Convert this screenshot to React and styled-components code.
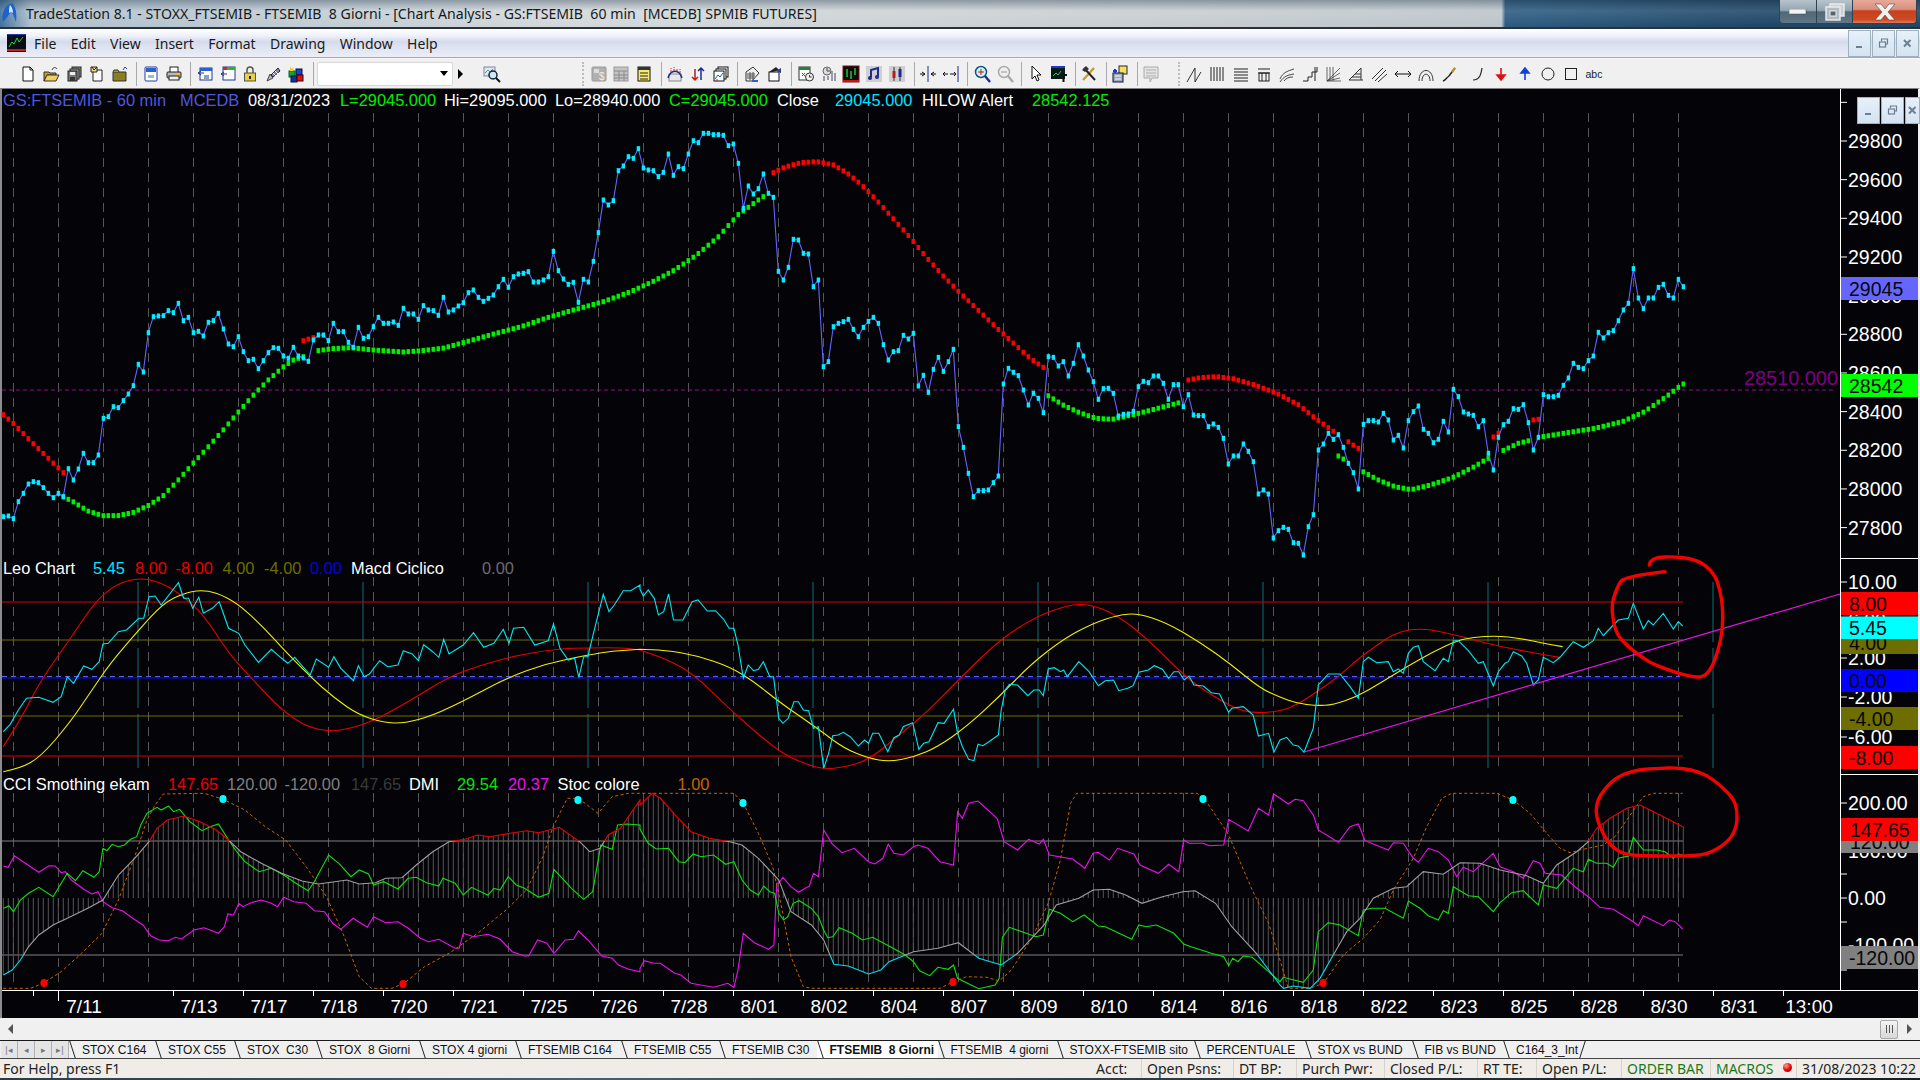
import styled, { createGlobalStyle } from 'styled-components';

const GlobalStyle = createGlobalStyle`
  html, body {
    margin: 0;
    padding: 0;
    width: 1920px;
    height: 1080px;
    overflow: hidden;
    background: #f0f0f0;
  }
  * {
    box-sizing: border-box;
  }
`;

const CHART_BG = '#040308';
const ARIAL = '"Liberation Sans", Arial, sans-serif';
const UI_FONT = '"Noto Sans", "Open Sans", sans-serif';

/* ---------- layout ---------- */

const Window = styled.div`
  width: 1920px;
  height: 1080px;
  display: flex;
  flex-direction: column;
  overflow: hidden;
`;

const TitleBar = styled.div`
  height: 29px;
  display: flex;
  align-items: flex-start;
  border-bottom: 2px solid #2a3138;
  background:
    linear-gradient(180deg, rgba(40, 60, 80, 0.38) 0, rgba(255, 255, 255, 0.12) 40%, rgba(255, 255, 255, 0) 100%),
    linear-gradient(90deg, #3e6f9c 0, #aebfcc 1.6%, #d3d8db 30%, #c7cdd1 60%, #bcc5cb 78.2%, #2b5a7f 78.4%, #1d4566 92%);
`;

const AppIcon = styled.svg`
  width: 18px;
  height: 24px;
  margin: 2px 7px 0 1px;
  flex: none;
`;

const TitleText = styled.div`
  font: 14.13px ${UI_FONT};
  line-height: 28px;
  color: #15191c;
  white-space: pre;
  flex: 1;
`;

const WinButton = styled.div`
  width: ${(props) => props.$w}px;
  height: 24px;
  display: flex;
  align-items: center;
  justify-content: center;
  border: 1px solid #33414d;
  border-top: none;
  border-left-width: ${(props) => (props.$first ? 1 : 0)}px;
  border-radius: ${(props) => (props.$first ? '0 0 0 4px' : props.$close ? '0 0 4px 0' : '0')};
  background: ${(props) =>
    props.$close
      ? 'linear-gradient(180deg, #e8a898 0, #d99080 40%, #c8401c 48%, #cc4a24 85%, #e07858 100%)'
      : 'linear-gradient(180deg, #b7c4cd 0, #93a5b1 45%, #51687a 52%, #5f7686 100%)'};
`;

const WinControls = styled.div`
  display: flex;
  margin-right: 3px;
`;

const MenuBar = styled.div`
  height: 29px;
  display: flex;
  align-items: center;
  padding: 0 1px 0 7px;
  border-bottom: 1px solid #a8a8b0;
  background: linear-gradient(180deg, #ffffff 0, #f1f3fa 22%, #d6dbed 45%, #dfe3f2 65%, #ebeef7 100%);
`;

const MenuLogo = styled.svg`
  width: 19px;
  height: 18px;
  flex: none;
  margin-right: 8px;
`;

const MenuList = styled.div`
  display: flex;
  gap: 14.3px;
  flex: 1;
`;

const MenuItem = styled.span`
  font: 14px ${UI_FONT};
  color: #1a1a1a;
`;

const MdiButtons = styled.div`
  display: flex;
  gap: 1px;
  ${(props) => (props.$floating ? 'position: absolute; top: 8px; right: -2px;' : '')}
`;

const MdiButton = styled.div`
  width: ${(props) => props.$w || 23}px;
  height: 27px;
  display: flex;
  align-items: center;
  justify-content: center;
  background: linear-gradient(180deg, #e6f0f9, #d4e3f3);
  border: 1px solid #9fb0be;
`;

const Toolbar = styled.div`
  height: 30px;
  display: flex;
  align-items: center;
  padding-left: 17px;
  background: #f0f0f0;
  border-top: 1px solid #f8f8f8;
`;

const ToolSlot = styled.div`
  width: ${(props) => props.$w || 22.9}px;
  height: 20px;
  flex: none;
  display: flex;
  align-items: center;
  justify-content: center;
`;

const ToolSep = styled.div`
  width: 1px;
  height: 24px;
  flex: none;
  margin: 0 2px 0 5px;
  background: #a9a9a9;
`;

const ToolGap = styled.div`
  width: ${(props) => props.$w}px;
  flex: none;
`;

const ToolGrip = styled.div`
  width: 2px;
  height: 24px;
  flex: none;
  border-left: 2px dotted #bdbdbd;
  margin-right: 3px;
`;

const ComboBox = styled.div`
  width: 136px;
  height: 24px;
  flex: none;
  margin-left: 1.5px;
  display: flex;
  align-items: center;
  justify-content: flex-end;
  padding-right: 4px;
  background: #fff;
  border: 1px solid #d8d8d8;
  border-radius: 2px;
`;

const ComboArrow = styled.span`
  width: 0;
  height: 0;
  border-left: 4.5px solid transparent;
  border-right: 4.5px solid transparent;
  border-top: 5px solid #000;
`;

const PlayArrow = styled.span`
  width: 0;
  height: 0;
  flex: none;
  margin-left: 5px;
  border-top: 5px solid transparent;
  border-bottom: 5px solid transparent;
  border-left: 5px solid #000;
`;

const ChartFrame = styled.div`
  height: 930px;
  display: flex;
  flex-direction: column;
  background: ${CHART_BG};
  border-top: 1px solid #808080;
  border-left: 2px solid #8c8c8c;
  border-right: 2px solid #f0f0f0;
`;

const Pane = styled.div`
  height: ${(props) => props.$h}px;
  flex: none;
  display: flex;
  position: relative;
`;

const Plot = styled.svg`
  width: 1838px;
  height: 100%;
  flex: none;
  overflow: visible;
  display: block;
`;

const Axis = styled.svg`
  width: 78px;
  height: 100%;
  flex: none;
  display: block;
  background: linear-gradient(#fff, #fff) left top / 1px 100% no-repeat;
`;

const AxisText = styled.text`
  font: 19.5px ${ARIAL};
  dominant-baseline: central;
  fill: ${(props) => props.$fill || '#fff'};
`;

const Legend = styled.div`
  position: absolute;
  top: ${(props) => props.$top}px;
  left: 1px;
  display: flex;
  height: 20px;
  align-items: center;
`;

const LegendItem = styled.span`
  width: ${(props) => (props.$w ? `${props.$w}px` : 'auto')};
  flex: none;
  white-space: pre;
  font: 16.4px ${ARIAL};
  color: ${(props) => props.$c};
`;

const TimeAxis = styled.div`
  height: 28px;
  flex: none;
  display: flex;
  position: relative;
  padding-left: 47px;
  border-top: 1px solid #fff;
`;

const TimeLabel = styled.div`
  width: 70px;
  flex: none;
  position: relative;
  margin-left: ${(props) => props.$ml || 0}px;
  padding-top: 5px;
  text-align: center;
  font: 19px ${ARIAL};
  color: #fff;

  &::before {
    content: '';
    position: absolute;
    left: 9px;
    top: 0;
    width: 1px;
    height: ${(props) => (props.$long ? 10 : 5)}px;
    background: #fff;
  }
`;

const SmallTick = styled.span`
  position: absolute;
  left: 31px;
  top: 0;
  width: 1px;
  height: 5px;
  background: #fff;
`;

const ScrollRow = styled.div`
  height: 22px;
  flex: none;
  display: flex;
  align-items: center;
  padding: 0 8px 0 8px;
  background: #f0f0f0;
`;

const ScrollArrow = styled.span`
  width: 0;
  height: 0;
  flex: none;
  border-top: 5px solid transparent;
  border-bottom: 5px solid transparent;
  ${(props) => (props.$right ? 'border-left: 5px solid #555;' : 'border-right: 5px solid #555;')}
`;

const ScrollTrack = styled.div`
  flex: 1;
`;

const ScrollThumb = styled.div`
  width: 18px;
  height: 19px;
  flex: none;
  margin-right: 9px;
  display: flex;
  gap: 2px;
  align-items: center;
  justify-content: center;
  border: 1px solid #a8a8a8;
  border-radius: 2px;
  background: linear-gradient(180deg, #f4f4f4, #d8d8d8);

  & > i {
    width: 1px;
    height: 8px;
    background: #555;
  }
`;

const TabRow = styled.div`
  height: 19px;
  flex: none;
  display: flex;
  align-items: stretch;
  background: #f0f0f0;
  border-top: 1px solid #1a1a1a;
  border-bottom: 1px solid #444;
`;

const TabNav = styled.div`
  width: 69px;
  flex: none;
  display: flex;
  padding-left: 1px;
`;

const TabNavButton = styled.div`
  width: 17px;
  display: flex;
  align-items: center;
  justify-content: center;
  color: #777;
  font: 9px ${ARIAL};
  border-right: 1px solid #b0b0b0;
  background: #e4e4e4;
`;

const Tab = styled.div`
  position: relative;
  flex: none;
  width: ${(props) => props.$w}px;
  padding: 1px 0 0 13px;
  font: ${(props) => (props.$active ? 'bold ' : '')}12px ${ARIAL};
  line-height: 17px;
  white-space: pre;
  color: #111;
  background: ${(props) => (props.$active ? '#fff' : 'transparent')};

  &::before {
    content: '';
    position: absolute;
    left: 3px;
    top: 0;
    bottom: 0;
    border-left: 1px solid #222;
    transform: skewX(18deg);
  }

  &:last-child::after {
    content: '';
    position: absolute;
    right: 2px;
    top: 0;
    bottom: 0;
    border-left: 1px solid #222;
    transform: skewX(-18deg);
  }
`;

const StatusBar = styled.div`
  height: 19px;
  flex: none;
  display: flex;
  align-items: center;
  background: #f0ede9;
  font: 14px ${UI_FONT};
  color: #222;
`;

const StatusHelp = styled.div`
  flex: 1;
  padding-left: 3px;
`;

const StatusCell = styled.div`
  width: ${(props) => props.$w}px;
  flex: none;
  padding-left: 5px;
  white-space: nowrap;
  overflow: hidden;
  color: ${(props) => props.$c || '#222'};
  border-left: ${(props) => (props.$plain ? 'none' : '1px solid #d6d2ce')};
  display: flex;
  align-items: center;
  height: 100%;
`;

const StatusDot = styled.span`
  width: 9px;
  height: 9px;
  border-radius: 50%;
  margin-bottom: 3px;
  background: radial-gradient(circle at 35% 30%, #ff9a9a, #e00000 55%, #800000);
`;

const BottomEdge = styled.div`
  height: 2px;
  flex: none;
  background: linear-gradient(90deg, #2a3a48, #48606e 30%, #22303a 70%, #12202c);
`;

/* ---------- toolbar icons ---------- */

const ToolSvg = styled.svg`
  width: 18px;
  height: 18px;
  display: block;
`;

const ICONS = {
  newDoc: <><path d="M4 2h7l3 3v11H4z" fill="#fff" stroke="#111" /><path d="M11 2v3h3" fill="none" stroke="#111" /></>,
  openFolder: <><path d="M2 7h5l1 1h6v2H5l-3 6z" fill="#c89a2a" stroke="#333" /><path d="M2 16l3-6h12l-3 6z" fill="#f0cf60" stroke="#333" /><path d="M10 5c1-3 4-3 5-1" fill="none" stroke="#333" /></>,
  saveAll: <><rect x="7" y="2" width="9" height="10" fill="#888" stroke="#222" /><rect x="5" y="4" width="9" height="10" fill="#aaa" stroke="#222" /><rect x="3" y="6" width="9" height="10" fill="#777" stroke="#222" /><rect x="5" y="7" width="5" height="3" fill="#eee" /><rect x="5" y="12" width="5" height="4" fill="#333" /></>,
  docTag: <><path d="M5 5h9v11H5z" fill="#fff" stroke="#222" /><path d="M3 2h6v5H3z" fill="#f4e27a" stroke="#222" /><path d="M4 2l2 3 3-3" fill="none" stroke="#222" /></>,
  folderUp: <><path d="M2 7h13v9H2z" fill="#8a7f20" stroke="#333" /><path d="M2 7l1-2h4l1 2" fill="#a89a30" stroke="#333" /><path d="M12 5l2-3 2 2" fill="none" stroke="#2244aa" /></>,
  preview: <><rect x="3" y="2" width="12" height="14" rx="1" fill="#fff" stroke="#1f3fa8" /><rect x="4" y="3" width="10" height="4" fill="#2d5fd0" /><rect x="6" y="10" width="6" height="3" fill="#9bc" /></>,
  printer: <><rect x="5" y="2" width="8" height="6" fill="#fff" stroke="#222" /><rect x="2" y="7" width="14" height="6" rx="1" fill="#b8b8b8" stroke="#222" /><rect x="4" y="11" width="10" height="4" fill="#eee" stroke="#222" /><path d="M11 9h3" stroke="#f0c030" strokeWidth="2" /></>,
  winBack: <><rect x="4" y="3" width="12" height="12" fill="#fff" stroke="#1b3a8f" /><rect x="4" y="3" width="12" height="3" fill="#2d5fd0" /><path d="M8 8H2l3-2M2 8l3 2" fill="none" stroke="#1b3a8f" /><path d="M8 11h5M8 13h5" stroke="#1b3a8f" /></>,
  winBars: <><rect x="4" y="2" width="12" height="13" fill="#fff" stroke="#1b3a8f" /><rect x="4" y="2" width="4" height="3" fill="#d22" /><rect x="8" y="2" width="4" height="3" fill="#2b2" /><rect x="12" y="2" width="4" height="3" fill="#2b2" /><path d="M8 9H2l3-2M2 9l3 2" fill="none" stroke="#1b3a8f" /></>,
  lock: <><path d="M6 8V5a3 3 0 0 1 6 0v3" fill="none" stroke="#555" strokeWidth="1.5" /><rect x="3.5" y="8" width="11" height="8" fill="#e8d040" stroke="#554" /><rect x="8" y="11" width="2" height="3" fill="#222" /></>,
  wand: <><path d="M3 16l3-7 3 4z" fill="#bbb" stroke="#444" /><path d="M7 10l7-7 2 3-7 6z" fill="#88a" stroke="#224" /><path d="M9 8l3 3M11 6l3 3" stroke="#fff" /></>,
  cubes: <><rect x="2" y="6" width="6" height="6" fill="#19a030" stroke="#063" /><rect x="9" y="4" width="6" height="6" fill="#2040d0" stroke="#013" /><rect x="4" y="11" width="6" height="6" fill="#1a30a0" stroke="#013" /><rect x="10" y="10" width="6" height="6" fill="#d01818" stroke="#400" /><path d="M3 1l2 3 2-2-1 4-3 0z" fill="#f0d020" /></>,
  search: <><rect x="1" y="2" width="11" height="9" fill="#dfe6ef" stroke="#7a8aa0" /><path d="M2 8l3-3 2 2 3-3" fill="none" stroke="#4a7" /><circle cx="10" cy="10" r="4" fill="#cfe8f4" stroke="#123" strokeWidth="1.5" /><path d="M13 13l4 4" stroke="#111" strokeWidth="2" /></>,
  greyCalc: <><rect x="2" y="2" width="14" height="14" rx="1" fill="#b0b0b0" stroke="#9a9a9a" /><rect x="4" y="4" width="5" height="4" fill="#dcdcdc" /><text x="9" y="15" fontSize="10" fill="#eee" fontFamily={ARIAL}>$</text></>,
  greyTable: <><rect x="2" y="2" width="14" height="14" fill="#c4c4c4" stroke="#9a9a9a" /><path d="M2 6h14M2 10h14M2 13h14M7 6v10M12 6v10" stroke="#8a8a8a" /></>,
  yellowTable: <><rect x="3" y="2" width="12" height="14" fill="#f7ea70" stroke="#111" /><rect x="3" y="2" width="12" height="3" fill="#333" /><path d="M5 8h8M5 11h8M5 14h8" stroke="#222" /></>,
  chartHat: <><rect x="3" y="9" width="12" height="7" fill="#e8e8e8" stroke="#888" /><path d="M2 13c3-9 11-9 14 0" fill="none" stroke="#1e2a90" strokeWidth="1.4" /><path d="M5 7V3M8 6V2M11 6V3M14 8V4" stroke="#d02020" strokeDasharray="2 1" /></>,
  sortArrows: <><path d="M6 4v11M3 12l3 3 3-3" fill="none" stroke="#c01818" strokeWidth="1.5" /><path d="M12 15V3M9 6l3-3 3 3" fill="none" stroke="#1a2a90" strokeWidth="1.5" /></>,
  chartStack: <><rect x="6" y="2" width="10" height="10" fill="#fff" stroke="#111" /><rect x="4" y="4" width="10" height="10" fill="#fff" stroke="#111" /><rect x="2" y="6" width="10" height="10" fill="#fff" stroke="#111" /><path d="M3 14l3-4 2 2 3-4" fill="none" stroke="#1a50d0" /><path d="M4 15h2" stroke="#c22" /></>,
  sheetLines: <><path d="M3 7l7-5 6 6-7 8H3z" fill="#eee" stroke="#333" /><path d="M4 9h8M4 11h8M4 13h7M7 7v8M10 7v8" stroke="#555" /><path d="M9 16h6" stroke="#2d5fd0" strokeWidth="2" /></>,
  capBox: <><rect x="3" y="7" width="10" height="9" fill="#fff" stroke="#111" /><path d="M3 7l7-5 3 3-6 2z" fill="#222" /><path d="M10 6l5-3v5z" fill="#2d3f90" /></>,
  calendar: <><rect x="2" y="2" width="11" height="13" fill="#fff" stroke="#333" /><rect x="2" y="2" width="11" height="3" fill="#1a8a30" /><path d="M5 8l3 3M8 8l-3 3" stroke="#c01818" /><circle cx="12.5" cy="12" r="4" fill="#eee" stroke="#333" /><path d="M12.5 10v2h2" fill="none" stroke="#333" /></>,
  dialBars: <><circle cx="7" cy="6" r="4" fill="#ddd" stroke="#666" /><path d="M7 3v3h3" fill="none" stroke="#444" /><path d="M4 11v5M8 11v4M12 6v10M15 8v8" stroke="#778" strokeWidth="1.4" /></>,
  blackChart: <><rect x="1" y="1" width="16" height="16" fill="#0a0a0a" stroke="#7a1010" /><rect x="1" y="15" width="16" height="2" fill="#d01010" /><path d="M5 4v8M9 6v8M13 3v7" stroke="#20d040" strokeWidth="1.4" /></>,
  blueNote: <><rect x="1" y="1" width="16" height="16" fill="#cfcfcf" /><path d="M6 12V5l7-2v8" fill="none" stroke="#1a2a90" strokeWidth="2" /><circle cx="5" cy="13" r="2" fill="#1a2a90" /><circle cx="12" cy="12" r="2" fill="#1a2a90" /></>,
  candles: <><rect x="1" y="1" width="16" height="16" fill="#cfcfcf" /><path d="M6 2v14M12 2v14" stroke="#333" /><rect x="4.5" y="6" width="3" height="7" fill="#c01818" /><rect x="10.5" y="4" width="3" height="8" fill="#1a2a90" /></>,
  arrowsIn: <><path d="M9 1v16" stroke="#1a2a90" /><path d="M1 9h5M3 7l3 2-3 2M17 9h-5M15 7l-3 2 3 2" fill="none" stroke="#111" /></>,
  arrowsOut: <><path d="M16 1v16" stroke="#1a2a90" /><path d="M1 9h5M3 7L1 9l2 2M8 9h6M12 7l2 2-2 2" fill="none" stroke="#111" /></>,
  zoomIn: <><circle cx="8" cy="7" r="5.5" fill="#d8f0f4" stroke="#0a5a80" strokeWidth="1.5" /><path d="M5 7h6M8 4v6" stroke="#c01818" /><path d="M12 11l5 6" stroke="#1a2a90" strokeWidth="2.4" /></>,
  zoomOut: <><circle cx="8" cy="7" r="5.5" fill="#eee" stroke="#aaa" strokeWidth="1.5" /><path d="M5 7h6" stroke="#999" /><path d="M12 11l5 6" stroke="#aaa" strokeWidth="2.4" /></>,
  cursor: <path d="M5 1v13l3-3 2 5 2-1-2-5h4z" fill="#fff" stroke="#111" />,
  chartT: <><rect x="1" y="3" width="14" height="11" fill="#0a1a14" /><rect x="1" y="1" width="14" height="2" fill="#1a3ad0" /><path d="M3 11l3-3 2 2 3-4" fill="none" stroke="#30d060" /><path d="M10 10h7M13.5 10v7" stroke="#111" strokeWidth="2" /></>,
  tools: <><path d="M3 15L14 3" stroke="#c0a030" strokeWidth="2.4" /><path d="M4 3l11 12" stroke="#222" strokeWidth="2" /><path d="M2 5l4-4 3 3-4 3z" fill="#333" /></>,
  boxes: <><rect x="8" y="1" width="8" height="8" fill="#f4e060" stroke="#223" /><rect x="2" y="8" width="10" height="9" fill="#9ab" stroke="#113" /><path d="M2 6h4M4 4v4" stroke="#1a3ad0" strokeWidth="2" /><path d="M4 11h6M4 14h6" stroke="#fff" /></>,
  greySheet: <><path d="M2 2h14v11H10l-2 4v-4H2z" fill="#e4e4e4" stroke="#aaa" /><path d="M4 5h10M4 8h10M4 11h10" stroke="#b0b0b0" /></>,
  lineTwin: <path d="M2 17L10 3l0 14 6-10" fill="none" stroke="#333" />,
  vLines: <path d="M3 2v14M6 2v14M9 2v14M12 2v14M15 2v14" stroke="#222" />,
  hLines: <path d="M2 4h14M2 7h14M2 10h14M2 13h14M2 16h14" stroke="#222" />,
  tile: <><path d="M3 4h12M3 8h12" stroke="#222" /><rect x="4" y="8" width="10" height="8" fill="none" stroke="#222" /><path d="M7 8v8M11 8v8" stroke="#222" /></>,
  arcs: <path d="M2 14c3-7 8-8 14-10M2 17c4-6 8-7 14-8M6 16c2-3 5-4 9-4" fill="none" stroke="#444" />,
  stairs: <path d="M2 16h5v-4h4V7h5V2M14 2v14" fill="none" stroke="#222" />,
  fan: <path d="M3 2v14h14M3 16L16 3M3 16L16 8M3 16l13-3M6 2v14M9 2v14" fill="none" stroke="#444" strokeWidth="0.8" />,
  triLine: <path d="M2 15h14M2 15L14 3v12M5 12h9M8 9h6" fill="none" stroke="#333" />,
  doubleSlash: <path d="M2 14L13 3M5 16L16 5M8 17L17 9" fill="none" stroke="#333" />,
  hArrow: <path d="M1 9h16M4 6L1 9l3 3M14 6l3 3-3 3" fill="none" stroke="#111" />,
  hoops: <path d="M2 16c0-14 14-14 14 0M5 16c0-9 8-9 8 0" fill="none" stroke="#333" />,
  pencil: <><path d="M3 16c3-1 3-3 6-5l6-8" fill="none" stroke="#222" strokeWidth="1.5" /><path d="M12 7l3-4" stroke="#c09020" strokeWidth="2.2" /></>,
  curve: <path d="M4 15c7 0 8-6 9-12" fill="none" stroke="#222" strokeWidth="1.2" />,
  redDown: <path d="M9 3v8M5 10l4 5 4-5z" fill="#e01010" stroke="#e01010" strokeWidth="1.6" />,
  blueUp: <path d="M9 15V7M5 8l4-5 4 5z" fill="#1040e0" stroke="#1040e0" strokeWidth="1.6" />,
  circle: <circle cx="9" cy="9" r="6" fill="none" stroke="#222" />,
  square: <rect x="3.5" y="3.5" width="11" height="11" fill="none" stroke="#222" />,
  abc: <text x="9" y="13" fontSize="10.5" textAnchor="middle" fill="#222" fontFamily={ARIAL}>abc</text>,
};

const TOOLS_LEFT = ['newDoc', 'openFolder', 'saveAll', 'docTag', 'folderUp', '|', 'preview', 'printer', '|', 'winBack', 'winBars', 'lock', 'wand', 'cubes', '|'];
const TOOLS_MID = ['greyCalc', 'greyTable', 'yellowTable', '|', 'chartHat', 'sortArrows', 'chartStack', '|', 'sheetLines', 'capBox', '|', 'calendar', 'dialBars', 'blackChart', 'blueNote', 'candles', '|', 'arrowsIn', 'arrowsOut', '|', 'zoomIn', 'zoomOut', '|', 'cursor', 'chartT', '|', 'tools', '|', 'boxes', '|', 'greySheet'];
const TOOLS_RIGHT = ['lineTwin', 'vLines', 'hLines', 'tile', 'arcs', 'stairs', 'fan', 'triLine', 'doubleSlash', 'hArrow', 'hoops', 'pencil'];
const TOOLS_END = ['curve', 'redDown', 'blueUp', 'circle', 'square', 'abc'];

function ToolGroup({ items, slot }) {
  return items.map((name, i) =>
    name === '|' ? (
      <ToolSep key={i} />
    ) : (
      <ToolSlot key={i} $w={slot}>
        <ToolSvg viewBox="0 0 18 18">{ICONS[name]}</ToolSvg>
      </ToolSlot>
    )
  );
}

/* ---------- chart data, read off the picture as zoomed crops ---------- */

const Z6 = [1600, 3, 540];
const Z8 = [0, 2.45, 550];
const Z9 = [640, 2.45, 550];
const Z10 = [1260, 3, 550];
const Z11 = [0, 1.8233, 110];
const Z12 = [860, 1.8233, 110];

const pairs = (flat, [x0, sx, y0]) => {
  const out = [];
  for (let i = 0; i < flat.length; i += 2) out.push([x0 + flat[i] / sx, y0 + flat[i + 1] / 3]);
  return out;
};

const stitch = (a, b, c) => [...pairs(a, Z8), ...pairs(b, Z9), ...pairs(c, Z10).filter((p) => p[0] > 1280)];

const interp = (pts, x) => {
  if (x <= pts[0][0]) return pts[0][1];
  for (let i = 1; i < pts.length; i++) {
    if (x <= pts[i][0]) {
      const t = (x - pts[i - 1][0]) / (pts[i][0] - pts[i - 1][0] || 1);
      return pts[i - 1][1] + t * (pts[i][1] - pts[i - 1][1]);
    }
  }
  return pts[pts.length - 1][1];
};

const polyline = (pts) => pts.map((p) => `${p[0].toFixed(1)},${p[1].toFixed(1)}`).join(' ');

const smoothPath = (pts) => {
  let d = `M${pts[0][0]} ${pts[0][1]}`;
  for (let i = 1; i < pts.length - 1; i++) {
    const mx = (pts[i][0] + pts[i + 1][0]) / 2;
    const my = (pts[i][1] + pts[i + 1][1]) / 2;
    d += `Q${pts[i][0].toFixed(1)} ${pts[i][1].toFixed(1)} ${mx.toFixed(1)} ${my.toFixed(1)}`;
  }
  const last = pts[pts.length - 1];
  return `${d}L${last[0]} ${last[1]}`;
};

const PRICE_A = [1220,1218,1226,1175,1150,1122,1115,1118,1133,1150,1163,1150,1160,1076,1110,1077,1030,1058,1058,1035,925,920,890,893,872,852,827,763,786,668,620,618,617,602,608,580,632,622,668,664,678,637,632,610,657,702,710,680,725,752,748,776,752,728,713,715,738,745,712,738,744,754,690,675,675,692,640,665,665,697,712,652,685,680,650,622,640,640,636,646,595,612,612,628,587,600,602,616,562,606,600,588,578,548,540,562,574,565,555,530,508,532,500,492,490,485,516,516,510,500,424,482,507,523,517,577,508,516,454,368,270,285,272,182,168,140,145,116,174,180,182,200,187,132,196,170,176,132,92,98,70,70,74,74,76,107,102,160,295,228,252,236,192,250,262,484,510,472,388,390,430,432,530,510,770,755,650,640,635,628,658,680];
const PRICE_B = [652,634,622,640,704,750,725,722,676,687,670,828,796,847,778,742,784,755,718,950,1012,1090,1160,1142,1142,1140,1118,1098,822,775,787,797,840,885,850,865,908,740,742,768,755,798,760,704,738,780,815,868,836,835,850,918,913,912,904,830,814,818,798,798,820,868,824,824,890,854,915,917,917,950,942,952,985,1062,1038,1038,1002,1024,1055,1152,1140,1152,1284,1262,1252,1258,1298,1300,1335,1250,1214,1020,1002,970,988,974,1012,1060,1088,1137,943,932,932,936,910,930,990,976,1014,932,905,888,958,970,998,988,934,966,838,860,906,912,916,950,932,1030,1080,982,944,934,896,898,884,938,1020,982,854,860,860,856,826,804,760,772,776,752,738,667,684,668,662,632,600,580,476,564,596,564,564,532,523,556,564,508,530];

const PRICE = [
  ...PRICE_A.map((z, i) => [3.3 + 5 * i, 110 + z / 3]),
  ...PRICE_B.map((z, i) => [863.3 + 5 * i, 110 + z / 3]),
];

const HILOW_GREEN = [
  pairs([115,1160,133,1175,160,1203,187,1217,215,1217,242,1208,270,1187,297,1158,325,1110,352,1060,380,1010,407,960,434,907,462,855,489,810,517,770,535,750,553,740], Z11),
  pairs([580,722,607,716,640,713,680,720,735,726,770,722,810,714,840,700,900,672,950,650,1000,622,1050,598,1100,575,1150,545,1190,515,1230,480,1270,435,1310,380,1345,315,1391,260], Z11),
  pairs([343,857,370,885,400,908,430,925,460,928,490,917,520,905,550,892,582,878], Z12),
  pairs([872,1038,882,1048], Z12),
  pairs([917,1085,945,1110,975,1130,1005,1139,1040,1125,1080,1103,1120,1070,1145,1045], Z12),
  pairs([1172,1022,1200,1000,1220,992], Z12),
  pairs([1245,980,1290,968,1340,955,1390,935,1430,905,1470,860,1500,822], Z12),
];

const HILOW_RED = [
  pairs([6,914,24,940,60,1000,115,1088], Z11),
  pairs([553,692,571,683], Z11),
  [...pairs([1410,188,1430,172,1460,158,1490,155,1520,165,1545,190,1564,215], Z11), ...pairs([6,230,30,270,60,325,90,380,120,440,150,495,180,545,215,600,250,655,280,700,310,745,334,772], Z12)],
  pairs([590,813,620,803,650,800,680,806,720,825,760,850,800,885,830,925,864,965], Z12),
  pairs([890,995,908,1015], Z12),
  pairs([1154,982,1163,970], Z12),
  pairs([1227,930,1236,928], Z12),
];

const sampleDots = (pts) => {
  const out = [];
  const first = Math.ceil((pts[0][0] - 3.3) / 5 - 0.01);
  for (let i = first; 3.3 + 5 * i <= pts[pts.length - 1][0] + 1; i++) {
    const x = 3.3 + 5 * i;
    out.push([x, interp(pts, x)]);
  }
  return out;
};

const LEO = stitch(
  [8,545,25,523,45,480,65,445,95,442,130,457,150,440,165,380,180,400,205,348,225,358,243,335,252,282,265,280,290,245,310,240,340,205,352,205,365,140,380,138,395,165,437,98,450,145,462,145,472,175,487,142,498,190,520,175,537,155,560,235,585,250,600,285,633,337,665,298,690,325,705,340,722,322,760,375,775,327,805,352,818,320,835,355,866,392,878,347,892,380,905,372,930,332,950,350,975,345,988,302,1010,312,1025,332,1038,284,1060,305,1075,322,1087,268,1100,312,1135,285,1160,248,1185,292,1210,280,1233,238,1247,280,1258,235,1283,232,1310,285,1343,272,1356,222,1372,295,1392,330,1408,325,1418,382,1430,320,1440,320,1455,245,1478,133,1492,185,1505,165,1527,122,1545,122,1568,105],
  [0,118,8,138,20,120,35,145,45,195,58,185,70,132,82,210,105,210,128,155,142,150,165,183,185,182,205,208,218,235,230,235,240,285,253,385,265,345,278,362,290,358,302,335,318,380,327,380,340,505,350,520,363,505,377,455,388,455,400,480,413,482,425,535,437,530,450,655,462,610,472,557,485,555,498,547,515,560,535,588,550,570,560,580,570,550,585,550,607,605,622,563,635,555,645,530,668,518,683,598,695,580,708,575,730,518,745,520,768,478,778,550,790,590,805,628,818,632,828,583,840,587,855,575,878,555,885,480,895,420,905,403,925,405,950,437,965,420,978,420,988,437,1000,357,1015,353,1030,365,1038,360,1047,380,1075,335,1100,365,1123,407,1140,392,1160,390,1173,422,1195,415,1208,407,1222,367,1245,360,1260,347,1280,358,1295,385,1308,365,1320,365,1333,390,1345,378,1357,405,1380,408,1400,428,1420,432,1442,487,1450,475,1478,470,1502,495,1515,558,1540,550,1553,607,1568,570],
  [0,553,22,550,40,605,60,570,80,562,100,585,115,588,132,607,160,535,175,405,205,372,240,372,270,410,295,445,310,335,325,322,350,338,385,335,400,365,415,357,430,370,445,310,460,292,475,287,490,335,525,362,550,325,565,335,580,272,595,272,625,302,655,340,670,335,700,408,715,365,735,340,745,335,760,305,785,318,800,340,820,405,835,390,850,322,880,338,900,322,940,275,970,292,1000,272,1015,235,1030,257,1060,225,1075,210,1105,205,1120,160,1150,237,1165,212,1180,225,1210,190,1240,237,1255,215,1268,228]
);

const MACD_RED = stitch(
  [8,590,50,510,100,390,170,270,230,160,280,105,340,83,390,95,440,130,500,195,560,310,620,390,690,480,750,530,810,545,860,535,920,510,1000,455,1100,380,1180,345,1260,318,1360,297,1450,293,1520,293,1568,300],
  [0,300,60,325,130,370,230,490,340,605,400,640,450,658,500,652,560,630,640,550,700,490,780,390,880,270,970,200,1050,165,1100,162,1170,195,1250,275,1340,385,1400,435,1480,490,1568,485],
  [10,490,60,485,120,460,170,425,230,385,290,330,345,290,400,252,450,238,510,238,600,258,680,280,760,297,840,312,900,322]
);

const MACD_YELLOW = stitch(
  [8,665,50,655,100,620,170,520,220,430,270,340,340,240,400,160,450,130,490,120,530,128,580,158,640,225,700,305,760,380,820,445,880,495,940,518,990,520,1060,497,1140,450,1240,385,1340,340,1440,315,1500,303,1568,298],
  [0,298,60,300,140,317,220,350,280,395,340,455,440,540,500,595,560,625,610,635,670,622,730,590,800,530,880,440,960,340,1040,265,1110,220,1170,195,1220,190,1290,218,1370,275,1450,345,1520,415,1568,442],
  [0,412,50,440,110,460,170,467,220,465,290,440,360,400,440,350,520,305,590,272,640,262,710,257,780,265,850,280,908,290]
);

const DMI_MAGENTA = stitch(
  [8,948,20,952,35,917,60,938,95,967,120,947,135,948,150,968,160,965,175,990,205,1018,225,1032,240,1025,252,1055,275,1073,300,1082,325,1105,350,1125,370,1158,390,1170,412,1172,430,1162,445,1167,475,1140,500,1133,515,1140,535,1150,550,1130,558,1092,572,1095,585,1060,595,1070,615,1058,640,1050,665,1060,680,1070,695,1042,720,1055,750,1060,770,1082,795,1085,815,1120,835,1138,865,1105,900,1132,915,1100,945,1118,975,1115,1000,1135,1030,1165,1050,1175,1075,1168,1115,1195,1125,1195,1135,1150,1160,1160,1195,1153,1225,1167,1255,1205,1285,1218,1295,1218,1317,1170,1340,1180,1357,1210,1385,1170,1405,1168,1417,1143,1440,1170,1475,1218,1500,1225,1515,1245,1540,1258,1568,1265],
  [0,1255,10,1232,35,1240,50,1240,85,1270,100,1275,125,1300,180,1312,215,1300,230,1312,240,1260,253,1150,280,1178,315,1198,328,1185,335,1000,340,1000,350,982,370,1010,388,1027,415,1008,425,970,437,980,450,840,470,880,495,908,525,895,560,935,575,942,595,925,608,883,622,910,645,915,670,890,680,885,705,895,735,935,768,945,778,785,790,805,805,760,828,753,875,805,892,875,925,900,952,868,978,882,988,868,1003,915,1060,927,1090,955,1110,910,1122,907,1150,930,1170,895,1210,912,1225,945,1270,970,1295,943,1320,965,1332,870,1345,880,1380,880,1395,887,1430,885,1442,808,1490,843,1515,775,1540,795,1552,732,1568,745],
  [0,782,25,795,40,732,85,762,105,748,130,752,160,795,175,840,235,877,270,830,295,822,315,872,385,900,400,878,430,880,460,925,475,937,505,895,535,905,565,930,590,980,610,952,640,965,700,910,720,950,760,965,790,985,820,932,840,940,855,970,905,975,945,1010,985,1040,1020,1072,1060,1078,1120,1115,1135,1127,1150,1097,1210,1127,1228,1110,1245,1115,1268,1137]
);

const DMI_GREEN = stitch(
  [8,1075,22,1068,33,1085,50,1050,70,1030,95,1012,130,1040,150,1000,165,970,185,992,203,962,230,982,243,965,252,895,262,902,275,883,290,890,305,885,320,868,335,860,345,825,360,790,385,772,395,780,413,768,425,785,440,778,465,815,495,842,515,830,535,822,560,870,580,905,600,935,635,965,665,955,695,975,725,1000,755,1022,770,995,805,915,830,940,860,980,880,960,903,972,915,1005,940,995,975,1017,1000,985,1020,982,1045,998,1075,1008,1085,985,1115,1000,1135,1035,1155,1012,1195,1035,1210,1015,1225,1020,1245,980,1265,1005,1285,1015,1320,1042,1345,1030,1357,958,1380,988,1400,1015,1430,1048,1452,1025,1472,885,1500,898,1513,825,1535,822,1568,825],
  [0,838,20,880,40,897,70,895,95,935,110,938,130,912,150,920,180,915,210,943,230,935,250,990,270,1020,290,1035,303,1008,318,1025,330,1030,340,1090,352,1110,362,1100,375,1060,390,1052,420,1075,437,1100,450,1140,460,1163,472,1160,488,1133,520,1150,545,1170,570,1162,620,1195,650,1215,670,1235,685,1262,710,1277,730,1252,755,1258,768,1245,778,1285,800,1298,830,1316,870,1305,880,1285,888,1162,905,1132,970,1160,988,1155,1003,1078,1030,1090,1060,1115,1088,1095,1122,1128,1140,1130,1205,1168,1222,1125,1240,1130,1265,1125,1308,1150,1332,1182,1350,1190,1400,1210,1430,1220,1442,1247,1452,1225,1465,1235,1478,1218,1500,1222,1540,1265,1568,1295],
  [0,1235,40,1272,70,1282,130,1297,160,1260,175,1145,205,1118,240,1125,295,1157,310,1080,335,1075,375,1075,430,1105,445,1053,480,1075,505,1097,535,1110,550,1082,565,1090,580,1010,625,1037,655,1040,700,1085,720,1058,755,1028,790,1022,835,1065,850,1005,890,1015,940,955,970,965,985,928,1010,940,1040,940,1060,952,1075,925,1105,918,1120,862,1150,900,1190,900,1215,905,1240,925,1255,912,1268,915]
);

const CCI = stitch(
  [8,1275,30,1260,50,1230,70,1190,95,1155,130,1125,165,1105,215,1075,252,1050,290,975,330,925,365,875,385,835,410,810,450,798,490,815,530,840,560,870,590,905,640,940,690,970,740,993,780,1002,820,995,850,990,880,1002,920,998,945,985,985,983,1020,945,1060,905,1100,875,1140,868,1170,855,1200,860,1250,850,1290,842,1320,848,1370,832,1420,875,1445,905,1470,895,1490,855,1520,835,1568,750],
  [0,765,30,730,50,745,90,800,125,845,170,865,220,875,250,885,290,925,340,990,370,1085,420,1125,450,1170,475,1243,510,1248,560,1272,590,1260,610,1235,670,1205,730,1195,780,1178,830,1225,885,1245,925,1210,990,1125,1020,1065,1075,1045,1110,1020,1150,1018,1190,1035,1230,1060,1280,1040,1330,1025,1360,1022,1410,1060,1450,1130,1510,1210,1568,1305],
  [0,1232,40,1280,70,1315,100,1308,150,1315,180,1285,220,1215,260,1145,300,1105,340,1045,400,1015,440,1010,490,965,550,973,600,938,660,940,720,960,800,977,850,1000,890,945,950,905,985,875,1010,835,1050,805,1100,775,1140,765,1200,795,1268,830]
);

const STOCH = stitch(
  [8,1315,75,1315,105,1300,150,1265,200,1210,250,1150,290,1050,330,920,360,810,380,765,400,732,500,730,547,748,600,780,650,830,700,870,750,950,800,1040,840,1150,880,1280,910,1315,960,1315,990,1300,1040,1250,1100,1210,1170,1150,1240,1080,1290,1020,1330,920,1355,830,1390,745,1417,745,1465,790,1500,740,1540,730,1568,730],
  [0,730,230,730,253,760,290,850,325,950,345,1060,370,1220,400,1310,420,1315,735,1315,768,1295,800,1280,850,1282,880,1293,910,1260,960,1165,1000,1060,1030,930,1055,760,1070,730,1365,730,1385,750,1440,850,1500,1020,1540,1120,1568,1230],
  [5,1072,30,1130,60,1230,85,1315,150,1315,190,1300,250,1215,310,1165,360,1110,400,1020,460,925,500,830,545,745,575,730,710,730,760,750,810,790,860,850,900,895,930,908,960,900,1030,885,1065,860,1100,810,1150,740,1180,730,1268,730]
);

const CIRCLE_TOP = pairs([195,95,130,103,75,115,60,125,45,160,35,195,40,250,55,290,90,325,125,350,150,368,210,392,270,410,310,412,335,385,355,330,368,270,368,200,360,150,345,105,310,70,270,55,220,50,170,52,150,65,148,75], Z6);
const CIRCLE_BOTTOM = pairs([185,685,145,685,90,695,50,712,15,745,-10,785,-12,830,10,885,40,925,80,945,160,948,290,948,340,935,390,900,410,860,412,810,400,775,360,735,320,705,270,688,220,683,185,685], Z6);

const GRID_X = Array.from({ length: 38 }, (_, i) => 13.5 + 45 * i);
const BAR_X = Array.from({ length: 337 }, (_, i) => 3.3 + 5 * i);
const TEAL_X = [138, 363, 588, 813, 1038, 1263, 1488, 1713];
const CYAN_MARKS = [[223, 799], [578, 800], [743, 803], [1203, 799], [1513, 800]];
const RED_MARKS = [[44, 983], [403, 984], [953, 982], [1323, 983]];

const PRICE_TOP = 89;
const LEO_TOP = 558;
const CCI_TOP = 774;

const TIME_LABELS = ['7/13', '7/17', '7/18', '7/20', '7/21', '7/25', '7/26', '7/28', '8/01', '8/02', '8/04', '8/07', '8/09', '8/10', '8/14', '8/16', '8/18', '8/22', '8/23', '8/25', '8/28', '8/30', '8/31', '13:00'];

const TABS = [
  ['STOX C164', 86], ['STOX C55', 79], ['STOX  C30', 82], ['STOX  8 Giorni', 103], ['STOX 4 giorni', 96], ['FTSEMIB C164', 106], ['FTSEMIB C55', 98], ['FTSEMIB C30', 97.5], ['FTSEMIB  8 Giorni', 121, true], ['FTSEMIB  4 giorni', 119], ['STOXX-FTSEMIB sito', 137], ['PERCENTUALE', 111], ['STOX vs BUND', 107], ['FIB vs BUND', 91.5], ['C164_3_Int', 82],
];

/* ---------- chart parts ---------- */

function GridLines({ from, to }) {
  return GRID_X.map((x) => (
    <line key={x} x1={x} x2={x} y1={from} y2={to} stroke="#565656" strokeDasharray="9 6" />
  ));
}

function Dots({ segments, color }) {
  return segments.map((seg, i) =>
    sampleDots(seg).map((p) => (
      <rect key={`${i}-${p[0]}`} x={p[0] - 1.8} y={p[1] - 2.5} width="3.6" height="5" fill={color} />
    ))
  );
}

function AxisTick({ y }) {
  return <line x1="1841" x2="1847" y1={y} y2={y} stroke="#fff" />;
}

function AxisBadge({ y, h = 23, bg, children, x = 1849 }) {
  return (
    <>
      <rect x="1841" y={y} width="78" height={h} fill={bg} />
      <AxisText x={x} y={y + 11.5} $fill="#07070a">{children}</AxisText>
    </>
  );
}

function PricePane() {
  const ticks = [];
  for (let v = 30000; v >= 27800; v -= 200) ticks.push([v, 141 + (29800 - v) * 0.1933]);
  return (
    <Pane $h={LEO_TOP - PRICE_TOP}>
      <Plot viewBox={`2 ${PRICE_TOP} 1838 ${LEO_TOP - PRICE_TOP}`}>
        <GridLines from={113} to={555} />
        <line x1="2" x2="1836" y1="390" y2="390" stroke="#8a108a" strokeDasharray="4 3" />
        <AxisText x="1838" y="378" textAnchor="end" $fill="#800080" style={{ fontSize: 19.9 }}>28510.000</AxisText>
        <Dots segments={HILOW_RED} color="#ff0000" />
        <Dots segments={HILOW_GREEN} color="#00f000" />
        <polyline points={polyline(PRICE)} fill="none" stroke="#6464ff" strokeWidth="1.1" />
        {PRICE.map((p) => (
          <rect key={p[0]} x={p[0] - 1.6} y={p[1] - 2.5} width="3.4" height="5" fill="#00eeff" />
        ))}
      </Plot>
      <Axis viewBox={`1840 ${PRICE_TOP} 78 ${LEO_TOP - PRICE_TOP}`}>
        {ticks.map(([v, y]) => <AxisTick key={v} y={y} />)}
        {ticks.filter(([v]) => v < 30000).map(([v, y]) => (
          <AxisText key={v} x="1848" y={y}>{v}</AxisText>
        ))}
        <AxisBadge y={277} bg="#6666ff">29045</AxisBadge>
        <AxisBadge y={374} bg="#00ff00">28542</AxisBadge>
      </Axis>
      <Legend $top={1}>
        <LegendItem $w={177} $c="#4f58dc">GS:FTSEMIB - 60 min</LegendItem>
        <LegendItem $w={68} $c="#4f58dc">MCEDB</LegendItem>
        <LegendItem $w={92} $c="#fff">08/31/2023</LegendItem>
        <LegendItem $w={104} $c="#00ee00">L=29045.000</LegendItem>
        <LegendItem $w={111} $c="#fff">Hi=29095.000</LegendItem>
        <LegendItem $w={114} $c="#fff">Lo=28940.000</LegendItem>
        <LegendItem $w={108} $c="#00ee00">C=29045.000</LegendItem>
        <LegendItem $w={58} $c="#fff">Close</LegendItem>
        <LegendItem $w={87} $c="#00e5ff">29045.000</LegendItem>
        <LegendItem $w={110} $c="#fff">HILOW Alert</LegendItem>
        <LegendItem $c="#00ee00">28542.125</LegendItem>
      </Legend>
      <MdiButtons $floating>
        <MdiButton><MinGlyph /></MdiButton>
        <MdiButton><RestoreGlyph /></MdiButton>
        <MdiButton $w={15}><CloseGlyph /></MdiButton>
      </MdiButtons>
    </Pane>
  );
}

function LeoPane() {
  return (
    <Pane $h={CCI_TOP - LEO_TOP}>
      <Plot viewBox={`2 ${LEO_TOP} 1838 ${CCI_TOP - LEO_TOP}`}>
        <GridLines from={577} to={770} />
        {TEAL_X.map((x) => (
          <line key={x} x1={x} x2={x} y1="582" y2="768" stroke="#0f6e72" strokeDasharray="60 6" />
        ))}
        <line x1="2" x2="1683" y1="602" y2="602" stroke="#d80000" />
        <line x1="2" x2="1683" y1="756" y2="756" stroke="#d80000" />
        <line x1="2" x2="1683" y1="640" y2="640" stroke="#6e6e00" />
        <line x1="2" x2="1683" y1="716" y2="716" stroke="#6e6e00" />
        <line x1="2" x2="1680" y1="678" y2="678" stroke="#1010e8" strokeWidth="1.2" />
        <line x1="2" x2="1680" y1="676.6" y2="676.6" stroke="#6a6aff" strokeDasharray="5 4" />
        <path d={smoothPath(MACD_RED)} fill="none" stroke="#e80000" strokeWidth="1.1" />
        <path d={smoothPath(MACD_YELLOW)} fill="none" stroke="#f0f000" strokeWidth="1.1" />
        <polyline points={polyline(LEO)} fill="none" stroke="#00e8f0" strokeWidth="1.1" />
        <line x1="1304" y1="752" x2="1840" y2="594" stroke="#e814e8" strokeWidth="1.2" />
        <path d={smoothPath(CIRCLE_TOP)} fill="none" stroke="#f40000" strokeWidth="3.4" strokeLinecap="round" />
      </Plot>
      <Axis viewBox={`1840 ${LEO_TOP} 78 ${CCI_TOP - LEO_TOP}`}>
        <line x1="1840" x2="1918" y1="558.5" y2="558.5" stroke="#fff" />
        {[[582, '10.00'], [620, '6.00'], [658, '2.00'], [697, '-2.00'], [737, '-6.00']].map(([y, t]) => (
          <g key={t}>
            <AxisTick y={y} />
            <AxisText x="1848" y={y}>{t}</AxisText>
          </g>
        ))}
        <AxisBadge y={592} bg="#ff0000">8.00</AxisBadge>
        <AxisBadge y={631} bg="#6e6e00">4.00</AxisBadge>
        <AxisBadge y={616.5} h={22.5} bg="#00ffff">5.45</AxisBadge>
        <AxisBadge y={669} bg="#0000ff">0.00</AxisBadge>
        <AxisBadge y={707} bg="#6e6e00">-4.00</AxisBadge>
        <AxisBadge y={746} bg="#ff0000">-8.00</AxisBadge>
      </Axis>
      <Legend $top={0}>
        <LegendItem $w={90} $c="#fff">Leo Chart</LegendItem>
        <LegendItem $w={42} $c="#00e5ff">5.45</LegendItem>
        <LegendItem $w={40.5} $c="#e80000">8.00</LegendItem>
        <LegendItem $w={47} $c="#e80000">-8.00</LegendItem>
        <LegendItem $w={41.5} $c="#6e6e00">4.00</LegendItem>
        <LegendItem $w={46} $c="#6e6e00">-4.00</LegendItem>
        <LegendItem $w={41} $c="#0000e8">0.00</LegendItem>
        <LegendItem $w={131} $c="#fff">Macd Ciclico</LegendItem>
        <LegendItem $c="#6c6c6c">0.00</LegendItem>
      </Legend>
    </Pane>
  );
}

function CciPane() {
  return (
    <Pane $h={216}>
      <Plot viewBox={`2 ${CCI_TOP} 1838 216`}>
        <defs>
          <clipPath id="cciHigh"><rect x="0" y="700" width="1840" height="141" /></clipPath>
          <clipPath id="cciMid"><rect x="0" y="841" width="1840" height="114" /></clipPath>
          <clipPath id="cciLow"><rect x="0" y="955" width="1840" height="40" /></clipPath>
        </defs>
        <GridLines from={793} to={988} />
        <line x1="2" x2="1683" y1="841" y2="841" stroke="#808080" />
        <line x1="2" x2="1683" y1="955" y2="955" stroke="#808080" />
        {BAR_X.map((x) => (
          <line key={x} x1={x} x2={x} y1="898" y2={interp(CCI, x)} stroke="#565656" />
        ))}
        <polyline points={polyline(DMI_MAGENTA)} fill="none" stroke="#ee10ee" strokeWidth="1.1" />
        <polyline points={polyline(DMI_GREEN)} fill="none" stroke="#10e010" strokeWidth="1.1" />
        <polyline points={polyline(STOCH)} fill="none" stroke="#c86400" strokeDasharray="3 2.5" />
        <polyline points={polyline(CCI)} fill="none" stroke="#f00000" strokeWidth="1.1" clipPath="url(#cciHigh)" />
        <polyline points={polyline(CCI)} fill="none" stroke="#a0a0a0" strokeWidth="1.1" clipPath="url(#cciMid)" />
        <polyline points={polyline(CCI)} fill="none" stroke="#00e0f0" strokeWidth="1.1" clipPath="url(#cciLow)" />
        {CYAN_MARKS.map(([x, y]) => <ellipse key={x} cx={x} cy={y} rx="3.6" ry="4" fill="#00ffff" />)}
        {RED_MARKS.map(([x, y]) => <ellipse key={x} cx={x} cy={y} rx="3.6" ry="4" fill="#ff0000" />)}
        <path d={smoothPath(CIRCLE_BOTTOM)} fill="none" stroke="#f40000" strokeWidth="3.4" strokeLinecap="round" />
      </Plot>
      <Axis viewBox={`1840 ${CCI_TOP} 78 216`}>
        <line x1="1840" x2="1918" y1="774.5" y2="774.5" stroke="#fff" />
        {[803, 874, 898, 922, 970].map((y) => <AxisTick key={y} y={y} />)}
        <AxisText x="1848" y="803">200.00</AxisText>
        <AxisText x="1848" y="851">100.00</AxisText>
        <AxisText x="1848" y="898">0.00</AxisText>
        <AxisText x="1848" y="945">-100.00</AxisText>
        <AxisBadge y={830} bg="#808080" x={1850}>120.00</AxisBadge>
        <AxisBadge y={818} bg="#ff0000" x={1850}>147.65</AxisBadge>
        <AxisBadge y={946} bg="#808080">-120.00</AxisBadge>
      </Axis>
      <Legend $top={0}>
        <LegendItem $w={165} $c="#fff">CCI Smothing ekam</LegendItem>
        <LegendItem $w={59} $c="#e80000">147.65</LegendItem>
        <LegendItem $w={57.5} $c="#808080">120.00</LegendItem>
        <LegendItem $w={66.5} $c="#808080">-120.00</LegendItem>
        <LegendItem $w={58} $c="#3a3a3a">147.65</LegendItem>
        <LegendItem $w={48} $c="#fff">DMI</LegendItem>
        <LegendItem $w={51} $c="#00e800">29.54</LegendItem>
        <LegendItem $w={49.5} $c="#ee10ee">20.37</LegendItem>
        <LegendItem $w={120} $c="#fff">Stoc colore</LegendItem>
        <LegendItem $c="#c86400">1.00</LegendItem>
      </Legend>
    </Pane>
  );
}

/* ---------- little window glyphs ---------- */

const Glyph = styled.svg`
  width: 13px;
  height: 13px;
`;

const MinGlyph = () => (
  <Glyph viewBox="0 0 13 13"><rect x="3" y="9" width="6" height="2" fill="#6e7f90" /></Glyph>
);

const RestoreGlyph = () => (
  <Glyph viewBox="0 0 13 13">
    <path d="M4.5 4V2h6v5H8.5" fill="none" stroke="#6e7f90" strokeWidth="1.2" />
    <rect x="2.5" y="5" width="6" height="5" fill="none" stroke="#6e7f90" strokeWidth="1.2" />
  </Glyph>
);

const CloseGlyph = () => (
  <Glyph viewBox="0 0 13 13"><path d="M3 3l6.5 6.5M9.5 3L3 9.5" stroke="#6e7f90" strokeWidth="2" /></Glyph>
);

export default function App() {
  return (
    <>
      <GlobalStyle />
      <Window>
        <TitleBar>
          <AppIcon viewBox="0 0 18 24">
            <path d="M2 20C0 11 4 3 11 1c4 3 5 12 4 19-2-5-3-9-5-10-2 2-4 6-8 10z" fill="#1f62c8" />
            <path d="M9 3c2 2 3 5 3 8l-2-1-2 1c0-3 0-6 1-8z" fill="#cfe4ff" />
          </AppIcon>
          <TitleText>TradeStation 8.1 - STOXX_FTSEMIB - FTSEMIB  8 Giorni - [Chart Analysis - GS:FTSEMIB  60 min  [MCEDB] SPMIB FUTURES]</TitleText>
          <WinControls>
            <WinButton $w={38} $first>
              <svg width="18" height="6"><rect width="17" height="5" fill="#f4f4f4" stroke="#444" strokeWidth="0.5" /></svg>
            </WinButton>
            <WinButton $w={36}>
              <svg width="20" height="18" viewBox="0 0 20 18">
                <rect x="5" y="1" width="14" height="12" fill="#c8d0d4" stroke="#eee" strokeWidth="1.4" />
                <rect x="1" y="4" width="14" height="13" fill="#b0bcc2" stroke="#eee" strokeWidth="1.4" />
                <rect x="5" y="8" width="6" height="5" fill="#56646c" stroke="#eee" />
              </svg>
            </WinButton>
            <WinButton $w={64} $close>
              <svg width="26" height="18" viewBox="0 0 26 18">
                <path d="M3 1h6l4 5 4-5h6l-7 8 7 8h-6l-4-5-4 5H3l7-8z" fill="#f4f0ee" stroke="#5a4a44" strokeWidth="0.6" />
              </svg>
            </WinButton>
          </WinControls>
        </TitleBar>

        <MenuBar>
          <MenuLogo viewBox="0 0 19 18">
            <rect width="19" height="18" fill="#0c0c14" />
            <path d="M2 13l3-5 2 2 3-6 2 4 4-5" fill="none" stroke="#20d040" />
            <path d="M0 16h19" stroke="#c02020" strokeWidth="2" />
            <path d="M0 0h19" stroke="#2a3ab0" strokeWidth="2" />
          </MenuLogo>
          <MenuList>
            {['File', 'Edit', 'View', 'Insert', 'Format', 'Drawing', 'Window', 'Help'].map((m) => (
              <MenuItem key={m}>{m}</MenuItem>
            ))}
          </MenuList>
          <MdiButtons>
            <MdiButton><MinGlyph /></MdiButton>
            <MdiButton><RestoreGlyph /></MdiButton>
            <MdiButton><CloseGlyph /></MdiButton>
          </MdiButtons>
        </MenuBar>

        <Toolbar>
          <ToolGroup items={TOOLS_LEFT} />
          <ComboBox><ComboArrow /></ComboBox>
          <PlayArrow />
          <ToolGap $w={17} />
          <ToolSlot><ToolSvg viewBox="0 0 18 18">{ICONS.search}</ToolSvg></ToolSlot>
          <ToolGap $w={79} />
          <ToolGrip />
          <ToolGroup items={TOOLS_MID} />
          <ToolGap $w={15} />
          <ToolGrip />
          <ToolGroup items={TOOLS_RIGHT} slot={23.15} />
          <ToolGap $w={6} />
          <ToolGroup items={TOOLS_END} slot={23.3} />
        </Toolbar>

        <ChartFrame>
          <PricePane />
          <LeoPane />
          <CciPane />
          <TimeAxis>
            <SmallTick />
            <TimeLabel $long>7/11</TimeLabel>
            {TIME_LABELS.map((t, i) => (
              <TimeLabel key={t} $ml={i === 0 ? 45 : 0}>{t}</TimeLabel>
            ))}
          </TimeAxis>
        </ChartFrame>

        <ScrollRow>
          <ScrollArrow />
          <ScrollTrack />
          <ScrollThumb><i /><i /><i /></ScrollThumb>
          <ScrollArrow $right />
        </ScrollRow>

        <TabRow>
          <TabNav>
            {['|◂', '◂', '▸', '▸|'].map((a) => <TabNavButton key={a}>{a}</TabNavButton>)}
          </TabNav>
          {TABS.map(([name, w, active]) => (
            <Tab key={name} $w={w} $active={active}>{name}</Tab>
          ))}
        </TabRow>

        <StatusBar>
          <StatusHelp>For Help, press F1</StatusHelp>
          <StatusCell $w={50} $plain>Acct:</StatusCell>
          <StatusCell $w={92}>Open Psns:</StatusCell>
          <StatusCell $w={63}>DT BP:</StatusCell>
          <StatusCell $w={88}>Purch Pwr:</StatusCell>
          <StatusCell $w={93}>Closed P/L:</StatusCell>
          <StatusCell $w={59}>RT TE:</StatusCell>
          <StatusCell $w={85}>Open P/L:</StatusCell>
          <StatusCell $w={89} $c="#1a7a1a">ORDER BAR</StatusCell>
          <StatusCell $w={68} $c="#1a7a1a">MACROS</StatusCell>
          <StatusCell $w={18} $plain><StatusDot /></StatusCell>
          <StatusCell $w={124}>31/08/2023 10:22</StatusCell>
        </StatusBar>
        <BottomEdge />
      </Window>
    </>
  );
}
